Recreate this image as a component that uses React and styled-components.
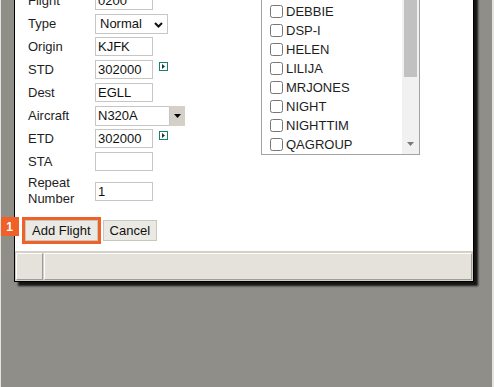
import React from "react";
import styled, { createGlobalStyle } from "styled-components";

const GlobalStyle = createGlobalStyle`
  html, body { margin: 0; padding: 0; background: #8f8e89; }
  body { font-family: "Liberation Sans", Arial, sans-serif; }
`;

const Desktop = styled.div`
  width: 494px;
  height: 387px;
  box-sizing: border-box;
  border-left: 1px solid #e4e3df;
  border-right: 2px solid #e4e3df;
  background: #8f8e89;
  overflow: hidden;
  padding-left: 13px;
`;

const Window = styled.div`
  width: 460px;
  box-sizing: border-box;
  margin-top: -40px;
  border: 1px solid #000;
  background: #fff;
  box-shadow: 4px 4px 2px rgba(0, 0, 0, 0.85);
  display: flex;
  flex-direction: column;
`;

const Body = styled.div`
  display: flex;
  align-items: flex-start;
  padding-left: 13px;
`;

const Form = styled.div`
  margin-top: 28px;
  width: 233px;
  display: grid;
  grid-template-columns: 67px auto;
  grid-template-rows: repeat(8, 23px) 36px;
  align-items: center;
  font-size: 13px;
  color: #1e1e1e;
`;

const Label = styled.div`
  line-height: 16px;
  display: flex;
  flex-direction: column;
`;

const Field = styled.div`
  display: flex;
  align-items: center;
`;

const TextInput = styled.input`
  box-sizing: border-box;
  width: ${(p) => p.$w || 58}px;
  height: ${(p) => p.$h || 19}px;
  border: 1px solid #c6c6c6;
  padding: 0 2px;
  margin: 0;
  font: 13px "Liberation Sans", Arial, sans-serif;
  color: #111;
  background: #fff;
  outline: none;
`;

const SelectWrap = styled.div`
  position: relative;
  display: inline-block;
`;

const Select = styled.select`
  appearance: none;
  -webkit-appearance: none;
  box-sizing: border-box;
  width: 73px;
  height: 20px;
  border: 1px solid #c6c6c6;
  border-radius: 0;
  padding: 0 0 0 4px;
  margin: 0;
  font: 13px "Liberation Sans", Arial, sans-serif;
  color: #111;
  background: #fff;
  outline: none;
  display: block;
`;

const Chevron = styled.svg`
  position: absolute;
  right: 5px;
  top: 8px;
  pointer-events: none;
`;

const ComboButton = styled.div`
  width: 15px;
  height: 20px;
  background: #d4d0c8;
  display: flex;
  align-items: center;
  justify-content: center;
`;

const PickIcon = styled.svg`
  margin-left: 6px;
  align-self: flex-start;
  margin-top: 2px;
`;

const ListBox = styled.div`
  margin-top: 9px;
  width: 159px;
  height: 185px;
  box-sizing: border-box;
  border: 1px solid #a3a3a3;
  display: flex;
  overflow: hidden;
`;

const Items = styled.div`
  flex: 1;
  padding-top: 31px;
  overflow: hidden;
`;

const Item = styled.label`
  display: flex;
  align-items: center;
  height: 19px;
  padding-left: 4px;
  font-size: 13px;
  color: #1e1e1e;
  white-space: nowrap;
  input {
    margin: 0 3px 0 4px;
    width: 13px;
    height: 13px;
  }
`;

const ScrollBar = styled.div`
  width: 17px;
  background: #f1f1f1;
  display: flex;
  flex-direction: column;
`;

const ArrowBox = styled.div`
  height: 17px;
  flex: none;
  display: flex;
  justify-content: center;
  align-items: flex-start;
  padding-top: 5px;
  box-sizing: border-box;
`;

const Thumb = styled.div`
  height: 89px;
  margin: 0 2px;
  background: #c1c1c1;
`;

const Spacer = styled.div`
  flex: 1;
`;

const ButtonRow = styled.div`
  display: flex;
  gap: 5px;
  padding: 11px 10px 10px;
`;

const ButtonWrap = styled.div`
  position: relative;
  display: flex;
`;

const Button = styled.button`
  box-sizing: border-box;
  height: 21px;
  padding: 0 6px;
  margin: 0;
  border: 1px solid #c8c6c1;
  border-radius: 0;
  background: #ebe9e4;
  font: 13px "Liberation Sans", Arial, sans-serif;
  color: #111;
  ${(p) => (p.$highlight ? "outline: 3px solid #f0612a; outline-offset: 0;" : "")}
`;

const Badge = styled.span`
  position: absolute;
  left: -25px;
  top: -3px;
  width: 19px;
  height: 19px;
  background: #f0612a;
  color: #fff;
  font: bold 12px "Liberation Sans", Arial, sans-serif;
  display: flex;
  align-items: center;
  justify-content: center;
`;

const StatusBar = styled.div`
  display: flex;
  gap: 1px;
  padding: 2px 1px 1px;
  background: #d4d0c8;
`;

const StatusCell = styled.div`
  height: 27px;
  box-sizing: border-box;
  ${(p) => (p.$grow ? "flex: 1;" : `width: ${p.$w}px;`)}
  border: 1px solid;
  border-color: #fdfdfd #9c9c9c #9c9c9c #fdfdfd;
  background: #e5e2dc;
`;

const Pick = () => (
  <PickIcon width="9" height="9" viewBox="0 0 9 9">
    <rect x="0.5" y="0.5" width="8" height="8" fill="#fff" stroke="#17806f" />
    <polygon points="3,2 6,4.5 3,7" fill="#1a3a34" />
  </PickIcon>
);

const users = [
  "DEBBIE",
  "DSP-I",
  "HELEN",
  "LILIJA",
  "MRJONES",
  "NIGHT",
  "NIGHTTIM",
  "QAGROUP",
];

export default function App() {
  return (
    <>
      <GlobalStyle />
      <Desktop>
        <Window>
          <Body>
            <Form>
              <Label>Flight</Label>
              <Field>
                <TextInput defaultValue="0200" />
              </Field>

              <Label>Type</Label>
              <Field>
                <SelectWrap>
                  <Select defaultValue="Normal">
                    <option>Normal</option>
                    <option>Positioning</option>
                  </Select>
                  <Chevron width="9" height="6" viewBox="0 0 9 6">
                    <polyline
                      points="1,1 4.5,4.5 8,1"
                      fill="none"
                      stroke="#111"
                      strokeWidth="2"
                    />
                  </Chevron>
                </SelectWrap>
              </Field>

              <Label>Origin</Label>
              <Field>
                <TextInput defaultValue="KJFK" />
              </Field>

              <Label>STD</Label>
              <Field>
                <TextInput defaultValue="302000" />
                <Pick />
              </Field>

              <Label>Dest</Label>
              <Field>
                <TextInput defaultValue="EGLL" />
              </Field>

              <Label>Aircraft</Label>
              <Field>
                <TextInput $w={75} $h={20} defaultValue="N320A" />
                <ComboButton>
                  <svg width="7" height="4" viewBox="0 0 7 4">
                    <polygon points="0,0 7,0 3.5,4" fill="#000" />
                  </svg>
                </ComboButton>
              </Field>

              <Label>ETD</Label>
              <Field>
                <TextInput defaultValue="302000" />
                <Pick />
              </Field>

              <Label>STA</Label>
              <Field>
                <TextInput defaultValue="" />
              </Field>

              <Label>
                <span>Repeat</span>
                <span>Number</span>
              </Label>
              <Field>
                <TextInput defaultValue="1" />
              </Field>
            </Form>

            <ListBox>
              <Items>
                {users.map((u) => (
                  <Item key={u}>
                    <input type="checkbox" />
                    {u}
                  </Item>
                ))}
              </Items>
              <ScrollBar>
                <ArrowBox />
                <Thumb />
                <Spacer />
                <ArrowBox>
                  <svg width="7" height="4" viewBox="0 0 7 4">
                    <polygon points="0,0 7,0 3.5,4" fill="#7a7a7a" />
                  </svg>
                </ArrowBox>
              </ScrollBar>
            </ListBox>
          </Body>

          <ButtonRow>
            <ButtonWrap>
              <Badge>1</Badge>
              <Button $highlight>Add Flight</Button>
            </ButtonWrap>
            <Button>Cancel</Button>
          </ButtonRow>

          <StatusBar>
            <StatusCell $w={27} />
            <StatusCell $grow />
          </StatusBar>
        </Window>
      </Desktop>
    </>
  );
}
